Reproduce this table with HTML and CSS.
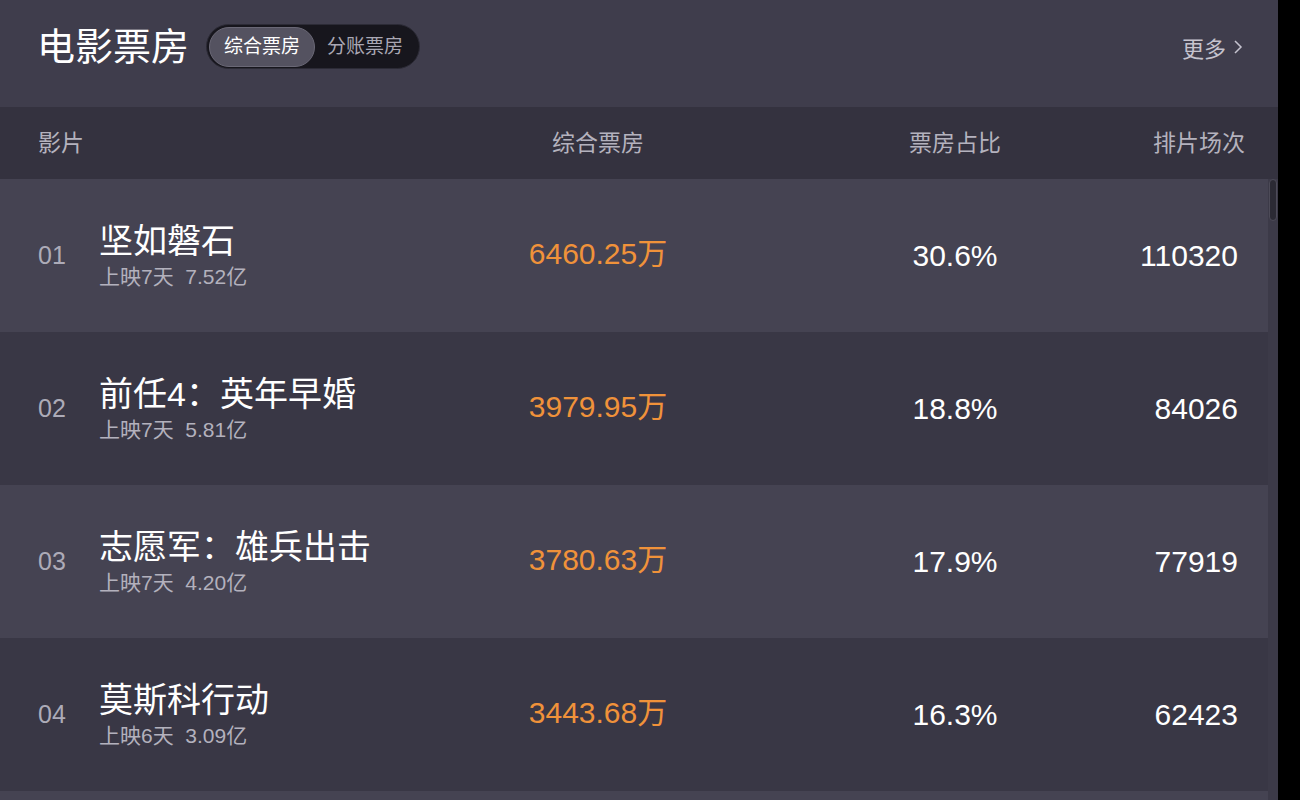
FILE: index.html
```html
<!DOCTYPE html>
<html lang="zh-CN">
<head>
<meta charset="utf-8">
<title>电影票房</title>
<link rel="stylesheet" href="styles.css">
</head>
<body>
<div class="panel">
  <header class="top">
    <h1 class="title">电影票房</h1>
    <div class="toggle">
      <span class="tab active">综合票房</span>
      <span class="tab">分账票房</span>
    </div>
    <a class="more">更多<svg class="chev" width="10" height="16" viewBox="0 0 10 16"><path d="M2 2 L8 8 L2 14" fill="none" stroke="currentColor" stroke-width="1.5"/></svg></a>
  </header>
  <div class="thead">
    <div class="h-film">影片</div>
    <div class="h-box">综合票房</div>
    <div class="h-ratio">票房占比</div>
    <div class="h-count">排片场次</div>
  </div>
  <div class="body">
    <div class="rows">
      <div class="row odd">
        <div class="rank">01</div>
        <div class="film"><div class="name">坚如磐石</div><div class="sub">上映7天&nbsp;&nbsp;7.52亿</div></div>
        <div class="box">6460.25万</div>
        <div class="ratio">30.6%</div>
        <div class="count">110320</div>
      </div>
      <div class="row even">
        <div class="rank">02</div>
        <div class="film"><div class="name">前任4：英年早婚</div><div class="sub">上映7天&nbsp;&nbsp;5.81亿</div></div>
        <div class="box">3979.95万</div>
        <div class="ratio">18.8%</div>
        <div class="count">84026</div>
      </div>
      <div class="row odd">
        <div class="rank">03</div>
        <div class="film"><div class="name">志愿军：雄兵出击</div><div class="sub">上映7天&nbsp;&nbsp;4.20亿</div></div>
        <div class="box">3780.63万</div>
        <div class="ratio">17.9%</div>
        <div class="count">77919</div>
      </div>
      <div class="row even">
        <div class="rank">04</div>
        <div class="film"><div class="name">莫斯科行动</div><div class="sub">上映6天&nbsp;&nbsp;3.09亿</div></div>
        <div class="box">3443.68万</div>
        <div class="ratio">16.3%</div>
        <div class="count">62423</div>
      </div>
      <div class="row odd"></div>
    </div>
    <div class="scrollbar"><div class="thumb"></div></div>
  </div>
</div>
</body>
</html>
```
FILE: styles.css
```css
* { box-sizing: border-box; }
html, body { margin: 0; padding: 0; }
body {
  background: #000;
  font-family: "Liberation Sans", "Noto Sans CJK SC", sans-serif;
  width: 1300px;
  height: 800px;
  overflow: hidden;
}
.panel {
  width: 1278px;
  height: 800px;
  background: #3f3d4c;
  overflow: hidden;
  display: flex;
  flex-direction: column;
}
.top {
  height: 107px;
  flex: none;
  display: flex;
  align-items: center;
  padding: 0 35px 14px 37px;
}
.title {
  margin: 0;
  font-size: 38px;
  font-weight: 400;
  color: #fff;
  line-height: 44px;
}
.toggle {
  margin-left: 17px;
  height: 45px;
  width: 214px;
  border-radius: 23px;
  background: #17161d;
  border: 1px solid #2c2b36;
  display: flex;
  align-items: center;
  padding: 0 2px;
}
.tab {
  flex: none;
  white-space: nowrap;
  font-size: 19px;
  color: #aaa8b4;
  height: 40px;
  line-height: 40px;
  padding: 0 0 0 12px;
  border-radius: 20px;
}
.tab.active {
  width: 106px;
  text-align: center;
  padding: 0;
  color: #fff;
  background: #545260;
  border: 1px solid #6a6876;
  line-height: 38px;
}
.more {
  margin-left: auto;
  font-size: 22px;
  color: #c5c3ce;
  display: flex;
  align-items: center;
  gap: 7px;
}
.thead, .row {
  display: grid;
  grid-template-columns: 61px 371px 256px 330px 1fr;
  align-items: center;
}
.thead {
  height: 72px;
  flex: none;
  background: #34323f;
  padding: 0 33px 5px 38px;
  font-size: 23px;
  color: #b4b2be;
}
.h-film { grid-column: 1 / 3; }
.h-box { text-align: center; }
.h-ratio, .ratio { padding-left: 128px; text-align: center; }
.h-count, .count { text-align: right; }
.body {
  flex: 1;
  display: flex;
  min-height: 0;
}
.rows { flex: 1; }
.row {
  height: 153px;
  padding: 0 30px 0 38px;
}
.row.odd { background: #454352; }
.row.even { background: #393745; }
.rank {
  font-size: 25px;
  color: #adabb8;
}
.name {
  font-size: 34px;
  line-height: 36px;
  color: #fff;
}
.sub {
  margin-top: 6px;
  font-size: 21px;
  line-height: 24px;
  color: #b3b1bd;
}
.box, .ratio, .count {
  font-size: 30px;
  line-height: 34px;
}
.box {
  text-align: center;
  color: #f0923a;
  padding-bottom: 4px;
}
.ratio, .count {
  color: #fff;
}
.scrollbar {
  width: 10px;
  flex: none;
  background: #3c3a48;
  padding: 0 1px;
}
.thumb {
  height: 42px;
  border-radius: 4px;
  background: #2b2a34;
  border: 1px solid #4d4b58;
}
```
